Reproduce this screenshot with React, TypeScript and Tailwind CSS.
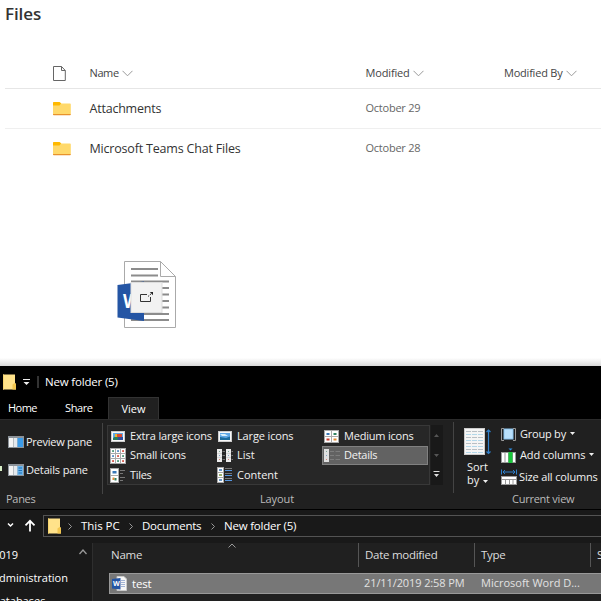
import type { ReactNode } from 'react';

type IconProps = { className?: string };

function Chevron({ className = '' }: IconProps) {
  return (
    <svg className={className} width="11" height="7" viewBox="0 0 11 7" fill="none" stroke="#999">
      <path d="M0.5 0.8 5.5 5.8 10.5 0.8" />
    </svg>
  );
}

function PageIcon() {
  return (
    <svg width="13" height="15" viewBox="0 0 13 15" fill="none" stroke="#666">
      <path d="M0.5 0.5H8.5L12.3 4.5V14.5H0.5Z M8.5 0.5V4.5H12.3" />
    </svg>
  );
}

function FolderIcon() {
  return (
    <svg className="mb-px" width="18" height="15" viewBox="0 0 18 15">
      <path d="M0 2a1 1 0 0 1 1-1h5.5l2 1.5H17a.8.8 0 0 1 .8.8V13H0Z" fill="#ffd96b" />
      <path d="M0 2a1 1 0 0 1 1-1h5.5l1.6 1.4L6.5 4.5H0Z" fill="#ffb900" />
      <path d="M0 13h17.8v.4a.8.8 0 0 1-.8.8H.8a.8.8 0 0 1-.8-.8Z" fill="#e8922c" />
    </svg>
  );
}

function ExplorerFolder() {
  return (
    <svg className="shrink-0" width="13" height="16" viewBox="0 0 13 16">
      <path d="M0 0.5H12V9L13 10V15.5H0Z" fill="#ffe28a" />
      <path d="M9.5 10.5 11.5 9 13 10V15.5H9.5Z" fill="#f2c64f" />
      <path d="M0 0.5H1V15.5H0Z" fill="#f7d56e" />
    </svg>
  );
}

function Caret() {
  return (
    <svg className="mb-[3px] ml-1 inline-block" width="5" height="3" viewBox="0 0 5 3">
      <path d="M0 0H5L2.5 3Z" fill="#eee" />
    </svg>
  );
}

function PaneIcon({ details = false }: { details?: boolean }) {
  return (
    <svg className="shrink-0" width="16" height="12" viewBox="0 0 16 12">
      <rect width="16" height="12" fill="#8b9299" />
      <rect x="1" y="2" width="4" height="9" fill="#f4f4f4" />
      <rect x="5.5" y="2" width="4" height="9" fill="#e4e8ec" />
      <rect x="9.5" y="2" width="5.5" height="9" fill={details ? '#6cb5ec' : '#3c9be8'} />
      {details && <path d="M10.5 4H14M10.5 6.5H14M10.5 9H14" stroke="#1d6fb5" />}
    </svg>
  );
}

function PictureIcon({ large = false }: { large?: boolean }) {
  return (
    <svg width="14" height="11" viewBox="0 0 14 11">
      <rect x="0.5" y="0.5" width="13" height="10" fill="#f8f8f8" stroke="#ccc" />
      <rect x="2" y="2" width="10" height="7" fill="#5fa8e6" />
      {large ? (
        <>
          <path d="M2 7 5 5 8 7V9H2Z" fill="#2b7d5c" />
          <path d="M6 3H11V6H6Z" fill="#db4b32" />
          <path d="M7 6H12V9H7Z" fill="#304d9c" />
          <path d="M4 3H6V6H4Z" fill="#e8b52f" />
        </>
      ) : (
        <>
          <path d="M2 6 5 6.5 8 7 12 5.5V9H2Z" fill="#1c6d9e" />
          <path d="M2 3H7L10 5H4Z" fill="#d7effb" />
        </>
      )}
    </svg>
  );
}

function MediumIcon() {
  return (
    <svg width="15" height="13" viewBox="0 0 15 13">
      <rect width="15" height="13" fill="#aaa" />
      <path d="M1 1H7V6H1ZM8 1H14V6H8ZM1 7H7V12H1ZM8 7H14V12H8Z" fill="#fff" />
      <rect x="2.5" y="3" width="3" height="2" fill="#3978b8" />
      <rect x="9.5" y="3" width="3" height="2" fill="#338562" />
      <rect x="2.5" y="8.5" width="3" height="2" fill="#ca3b2c" />
      <rect x="9.5" y="8.5" width="3" height="2" fill="#e18a32" />
    </svg>
  );
}

function SmallIcon() {
  const colors = ['#338562', '#3978b8', '#ca3b2c', '#3978b8', '#ca3b2c', '#338562', '#ca3b2c', '#338562', '#ca3b2c'];
  return (
    <svg width="16" height="16" viewBox="0 0 16 16">
      <rect width="16" height="16" fill="#aaa" />
      {colors.map((color, i) => (
        <g key={i} transform={`translate(${(i % 3) * 5 + 1} ${Math.floor(i / 3) * 5 + 1})`}>
          <rect width="4" height="4" fill="#fff" />
          <rect x="1.2" y="1.2" width="1.7" height="1.7" fill={color} />
        </g>
      ))}
    </svg>
  );
}

function ListIcon() {
  return (
    <svg width="16" height="13" viewBox="0 0 16 13">
      <path d="M0 0H5V13H0ZM9 0H14V13H9Z" fill="#ececec" />
      <path d="M0 4.5H5M0 8.5H5M9 4.5H14M9 8.5H14" stroke="#ccc" strokeWidth="0.7" />
      <path d="M2 2.5H3M11 2.5H12" stroke="#7faa98" />
      <path d="M2 6.5H3M11 6.5H12" stroke="#7fa3c8" />
      <path d="M2 10.5H3M11 10.5H12" stroke="#d8857c" />
      <path d="M5.5 2.5H8M5.5 6.5H8M5.5 10.5H8M14.5 2.5H16M14.5 6.5H16M14.5 10.5H16" stroke="#777" />
    </svg>
  );
}

function DetailsIcon() {
  return (
    <svg width="16" height="13" viewBox="0 0 16 13">
      <rect width="5" height="13" fill="#e0e0e0" />
      <path d="M2 2.5H3" stroke="#7faa98" />
      <path d="M2 6.5H3" stroke="#7fa3c8" />
      <path d="M2 10.5H3" stroke="#d8857c" />
      <path d="M6 2.5H10M11.5 2.5H16M6 6.5H10M11.5 6.5H16M6 10.5H10M11.5 10.5H16" stroke="#7d7d7d" />
    </svg>
  );
}

function TilesIcon() {
  return (
    <svg width="16" height="15" viewBox="0 0 16 15">
      <rect width="9" height="15" fill="#aaa" />
      <path d="M1 1H8V7H1ZM1 8H8V14H1Z" fill="#fff" />
      <rect x="2.5" y="3" width="4" height="2.5" fill="#3978b8" />
      <rect x="2.5" y="9.5" width="2" height="2.5" fill="#e18a32" />
      <rect x="4.5" y="10" width="2" height="2.5" fill="#338562" />
      <path d="M10 2.5H15M10 5.5H13M10 9.5H15M10 12.5H13" stroke="#777" />
    </svg>
  );
}

function ContentIcon() {
  return (
    <svg width="16" height="16" viewBox="0 0 16 16">
      <rect width="7" height="16" fill="#aaa" />
      <path d="M1 1H6V5H1ZM1 6H6V10H1ZM1 11H6V15H1Z" fill="#fff" />
      <path d="M2 3H5M2 13H5" stroke="#3978b8" strokeWidth="1.5" />
      <path d="M2 8H5" stroke="#79963b" strokeWidth="1.5" />
      <path d="M8 1.5H15M8 6.5H15M8 11.5H15" stroke="#777" />
      <path d="M8 3.5H15M8 8.5H15M8 13.5H15" stroke="#5796df" strokeWidth="1.2" />
    </svg>
  );
}

function SortIcon() {
  return (
    <svg width="27" height="28" viewBox="0 0 27 28">
      <rect x="0.5" y="0.5" width="20" height="26" fill="#f5f5f5" stroke="#ccc" />
      {[3, 6, 9, 12, 15, 18, 21, 24].map((y) => (
        <path key={y} d={`M2 ${y + 0.5}H19`} stroke={y % 2 ? '#b9bfc4' : '#b3d8ea'} strokeDasharray="5 1" />
      ))}
      <path d="M24.5 2V25.5M22.5 4 24.5 2 26.5 4M22.5 23.5 24.5 25.5 26.5 23.5" stroke="#2f7fca" strokeWidth="1.2" fill="none" />
    </svg>
  );
}

function GroupIcon() {
  return (
    <svg className="shrink-0" width="15" height="13" viewBox="0 0 15 13">
      <rect x="3" y="1" width="9" height="10" fill="#b9e0fb" stroke="#8cc4ee" />
      <path d="M3 0.5H0.5V12.5H3M12 0.5H14.5V12.5H12" fill="none" stroke="#999" />
    </svg>
  );
}

function AddColumnsIcon() {
  return (
    <svg className="mb-px shrink-0" width="15" height="15" viewBox="0 0 15 15">
      <path d="M7.5 0.5H11.5L9.5 2.5Z" fill="#2f8fe3" />
      <rect y="4" width="15" height="11" fill="#999" />
      <path d="M1 5H3.5V14H1ZM4.5 5H7V14H4.5ZM12 5H14V14H12Z" fill="#fff" />
      <rect x="7.5" y="4" width="4" height="11" fill="#19c83a" />
    </svg>
  );
}

function SizeColumnsIcon() {
  return (
    <svg className="shrink-0" width="16" height="16" viewBox="0 0 16 16">
      <path d="M0.5 0.5V5.5M15.5 0.5V5.5M2 3H14M4 1 2 3 4 5M12 1 14 3 12 5" fill="none" stroke="#2f7fca" />
      <rect y="7" width="16" height="9" fill="#999" />
      <path d="M1 8H15V10H1ZM1 11H4V15H1ZM5 11H8V15H5ZM9 11H11.5V15H9ZM12.5 11H15V15H12.5Z" fill="#fff" />
    </svg>
  );
}

function DraggedDocument() {
  return (
    <div className="absolute left-[117px] top-[260px] h-[68px] w-[59px]">
      <svg width="59" height="68" viewBox="0 0 59 68">
        <path d="M7.5 1.5H43.5L58.5 16.5V67.5H7.5Z" fill="#fff" stroke="#aaa" />
        <path d="M43.5 1.5V16.5H58.5" fill="none" stroke="#aaa" />
        <path d="M14 9H41M14 15.5H41M14 21.5H52M14 28H52M14 34.5H52M14 41H52M14 47.5H52M14 54H52M14 60H52" stroke="#8c8c8c" strokeWidth="2" />
        <path d="M0.5 25 27 21.5V61L0.5 57.5Z" fill="#2455a4" />
        <text x="6" y="48" fill="#fff" fontFamily="Open Sans, sans-serif" fontSize="19" fontWeight="700" textLength="17" lengthAdjust="spacingAndGlyphs">W</text>
        <rect x="14" y="22.5" width="31" height="30" fill="#f2f2f2" stroke="#ddd" />
        <path d="M30 34.5H23.5V41.5H33.5V37" fill="none" stroke="#333" />
        <path d="M31 36.5 34.5 33.5" stroke="#333" strokeDasharray="1.5 1" />
        <path d="M32.8 32H36V35.2Z" fill="#222" />
      </svg>
    </div>
  );
}

function WordFileIcon() {
  return (
    <svg className="shrink-0" width="15" height="15" viewBox="0 0 15 15">
      <path d="M5 0.5H12L14.5 3V14.5H5Z" fill="#f6f6f6" stroke="#c9c9c9" />
      <path d="M9 4.5H13M9 6.5H13M9 8.5H13M9 10.5H13" stroke="#a2b3d4" />
      <path d="M0 3 8.5 2V13.5L0 12.5Z" fill="#2455a4" />
      <text x="1" y="10.3" fill="#fff" fontFamily="Open Sans, sans-serif" fontSize="7" fontWeight="700">W</text>
    </svg>
  );
}

type GalleryItemProps = { icon: ReactNode; label: string; active?: boolean; textClass?: string };

function GalleryItem({ icon, label, active, textClass = '' }: GalleryItemProps) {
  return (
    <div className={`flex h-[19px] items-center border ${active ? 'border-[#818181] bg-[#626262]' : 'border-transparent'}`}>
      <span className="flex w-[17px] shrink-0 justify-center">{icon}</span>
      <span className={`ml-1 whitespace-nowrap ${textClass}`}>{label}</span>
    </div>
  );
}

function FilesTable() {
  const rows = [
    { name: 'Attachments', modified: 'October 29', tracking: 'tracking-[-0.22px]' },
    { name: 'Microsoft Teams Chat Files', modified: 'October 28', tracking: 'tracking-[-0.19px]' },
  ];
  const grid = 'grid grid-cols-[48px_36.5px_276px_138.5px_1fr] items-center';

  return (
    <div className="ml-[5px] text-[#444]">
      <div className={`${grid} h-[31px] border-b border-[#e6e6e6] text-[11px]`}>
        <span />
        <PageIcon />
        <span className="flex items-center pt-px tracking-[-0.4px]">Name<Chevron className="ml-[3px]" /></span>
        <span className="flex items-center pt-px tracking-[-0.15px]">Modified<Chevron className="ml-[3px]" /></span>
        <span className="flex items-center pt-px tracking-[-0.22px]">Modified By<Chevron className="ml-1" /></span>
      </div>
      {rows.map((row, i) => (
        <div key={row.name} className={`${grid} h-10 ${i === 0 ? 'border-b border-[#efefef]' : 'pb-px'}`}>
          <span />
          <FolderIcon />
          <span className={`pt-px text-[12.5px] text-[#333] ${row.tracking}`}>{row.name}</span>
          <span className={`text-[11px] tracking-[-0.24px] text-[#666] ${i === 0 ? '' : 'pb-px'}`}>{row.modified}</span>
        </div>
      ))}
    </div>
  );
}

function Ribbon() {
  return (
    <div className="flex h-[90px] border-t border-[#2b2b2b] bg-[#202020] text-[11px] font-medium text-[#f2f2f2]">
      {/* Panes */}
      <div className="relative w-[102px] shrink-0 pl-2 pt-[13px]">
        <div className="flex h-[18px] items-center gap-[2px] whitespace-nowrap tracking-[-0.25px]"><PaneIcon />Preview pane</div>
        <div className="mt-[10px] flex h-[18px] items-center gap-[2px] whitespace-nowrap tracking-[-0.15px]"><PaneIcon details />Details pane</div>
        <span className="absolute left-0 top-[46px] h-[5px] w-[2px] bg-[#d7edc5]" />
        <div className="-ml-[2px] mt-[12px] font-normal leading-4 tracking-[-0.3px] text-[#bbb]">Panes</div>
      </div>
      <div className="mt-[3px] h-[71px] w-px shrink-0 bg-[#444]" />

      {/* Layout gallery */}
      <div className="w-[341px] shrink-0 pl-1 pt-[5px]">
        <div className="flex">
          <div className="grid h-[60px] w-[323px] grid-cols-[107px_107px_106px] content-start gap-y-[0.5px] border border-[#383838] bg-[#272727] pt-[0.5px]">
            <GalleryItem icon={<PictureIcon large />} label="Extra large icons" textClass="tracking-[-0.14px]" />
            <GalleryItem icon={<PictureIcon />} label="Large icons" textClass="tracking-[-0.14px]" />
            <GalleryItem icon={<MediumIcon />} label="Medium icons" textClass="tracking-[-0.2px]" />
            <GalleryItem icon={<SmallIcon />} label="Small icons" textClass="tracking-[-0.14px]" />
            <GalleryItem icon={<ListIcon />} label="List" />
            <GalleryItem icon={<DetailsIcon />} label="Details" active textClass="tracking-[-0.24px]" />
            <GalleryItem icon={<TilesIcon />} label="Tiles" textClass="tracking-[-0.3px]" />
            <GalleryItem icon={<ContentIcon />} label="Content" textClass="tracking-[-0.02px]" />
          </div>
          <svg width="13" height="60" viewBox="0 0 13 60">
            <rect x="1" width="12" height="60" fill="#191919" />
            <path d="M4 12H9L6.5 9Z M4 29H9L6.5 32Z" fill="#555" />
            <path d="M3.5 46H9.5V47H3.5ZM4 49H9L6.5 52Z" fill="#ddd" />
          </svg>
        </div>
        <div className="mt-[6px] pl-[3px] text-center font-normal leading-4 tracking-[-0.1px] text-[#bbb]">Layout</div>
      </div>
      <div className="ml-[9px] mt-[2px] h-[71px] w-px shrink-0 bg-[#444]" />

      {/* Current view */}
      <div className="flex-1 pl-[10px]">
        <div className="flex">
          <div className="w-[37px] shrink-0 pt-[8px]">
            <SortIcon />
            <div className="mt-[5px] w-[27px] text-center leading-[12px]">Sort</div>
            <div className="flex w-[27px] items-end whitespace-nowrap pl-[3px] leading-[13px]">by<Caret /></div>
          </div>
          <div className="whitespace-nowrap pt-[4px]">
            <div className="flex h-[21px] items-center gap-[4px] tracking-[-0.22px]"><GroupIcon /><span>Group by<Caret /></span></div>
            <div className="flex h-[21px] items-center gap-[4px] tracking-[-0.14px]"><AddColumnsIcon /><span>Add columns<Caret /></span></div>
            <div className="flex h-[22px] items-center gap-[2px] tracking-[-0.15px]"><SizeColumnsIcon />Size all columns</div>
          </div>
        </div>
        <div className="mt-[3px] pl-[48px] font-normal leading-4 tracking-[-0.25px] text-[#bbb]">Current view</div>
      </div>
    </div>
  );
}

function Crumb({ label, width }: { label: string; width: string }) {
  return (
    <div className={`flex shrink-0 items-center whitespace-nowrap ${width}`}>
      <svg className="mr-[9px] shrink-0" width="4" height="7" viewBox="0 0 4 7" fill="none" stroke="#999">
        <path d="M0.5 0.5 3.5 3.5 0.5 6.5" />
      </svg>
      {label}
    </div>
  );
}

function Explorer() {
  return (
    <section className="h-[235px] overflow-hidden bg-black text-[11.5px] text-white">
      {/* Title bar */}
      <div className="flex h-[31px] items-center pl-[3px]">
        <ExplorerFolder />
        <svg className="ml-[7px] mt-[2px]" width="7" height="7" viewBox="0 0 7 7" fill="#eee">
          <path d="M0 0H7V1H0ZM0.5 3H6.5L3.5 6Z" />
        </svg>
        <span className="ml-[7px] h-[12px] w-[2px] bg-[#333]" />
        <span className="ml-[6px] tracking-[-0.18px]">New folder (5)</span>
      </div>
      <div className="flex h-[22px] text-[11px] font-medium">
        <span className="w-[65px] pl-2 leading-[22px] tracking-[-0.55px]">Home</span>
        <span className="w-[43px] leading-[22px] tracking-[-0.4px]">Share</span>
        <span className="w-[51px] border border-b-0 border-[#333] bg-[#202020] text-center leading-[21px]">View</span>
      </div>
      <Ribbon />

      {/* Address bar */}
      <div className="flex h-[34px] items-start border-t border-black bg-[#191919] pt-[5px]">
        <svg className="shrink-0" width="43" height="22" viewBox="0 0 43 22" fill="none" stroke="#fff">
          <path d="M8 8.5 10.5 11 13 8.5" strokeWidth="1.5" />
          <path d="M30 16.5V6M25.5 10.3 30 5.8 34.5 10.3" strokeWidth="1.8" />
        </svg>
        <div className="flex h-[22px] flex-1 items-center border border-r-0 border-[#535353] pl-[4px]">
          <ExplorerFolder />
          <div className="ml-[7px] flex text-[11.5px]">
            <Crumb label="This PC" width="w-[61px] tracking-[-0.05px]" />
            <Crumb label="Documents" width="w-[82px] tracking-[-0.25px]" />
            <Crumb label="New folder (5)" width="w-[100px] tracking-[-0.22px]" />
          </div>
        </div>
      </div>

      {/* Navigation pane and file list */}
      <div className="flex h-[58px] bg-[#202020]">
        <div className="relative w-[93px] shrink-0 overflow-hidden border-r border-[#2e2e2e] bg-[#191919] text-[11px]">
          <div className="-ml-[7px] flex h-[83px] flex-col whitespace-nowrap leading-[23px]">
            <span>2019</span>
            <span className="tracking-[-0.02px]">administration</span>
            <span>databases</span>
          </div>
          <svg className="absolute left-[79px] top-[6px]" width="8" height="6" viewBox="0 0 8 6" fill="none" stroke="#999">
            <path d="M0.5 5 4 1 7.5 5" strokeWidth="1.3" />
          </svg>
        </div>
        <div className="relative w-[508px] pl-4">
          <svg className="absolute left-[135px] top-0" width="8" height="5" viewBox="0 0 8 5" fill="none" stroke="#999">
            <path d="M0.5 4.5 4 1 7.5 4.5" />
          </svg>
          <div className="flex h-[30px] text-[#ddd]">
            <span className="h-6 w-[250px] shrink-0 border-r border-[#555] pl-[2px] leading-6 tracking-[-0.25px]">Name</span>
            <span className="h-6 w-[116px] shrink-0 border-r border-[#555] pl-[6px] leading-6 tracking-[-0.28px]">Date modified</span>
            <span className="h-6 w-[116px] shrink-0 border-r border-[#555] pl-[6px] leading-6 tracking-[-0.3px]">Type</span>
            <span className="pl-[6px] leading-6">Size</span>
          </div>
          <div className="flex h-[21px] items-center whitespace-nowrap border border-r-0 border-[#999] bg-[#777]">
            <span className="flex w-[254px] items-center gap-[5px] pl-[2px] font-medium tracking-[-0.2px]"><WordFileIcon />test</span>
            <span className="w-[117px] text-[11px] tracking-[-0.1px] text-[#e2e2e2]">21/11/2019 2:58 PM</span>
            <span className="text-[11px] text-[#e2e2e2]">Microsoft Word D...</span>
          </div>
        </div>
      </div>
    </section>
  );
}

export default function App() {
  return (
    <main className="relative h-[601px] w-[601px] overflow-hidden bg-white font-['Open_Sans','Noto_Sans',sans-serif]">
      <section className="h-[366px] bg-[linear-gradient(to_bottom,#fff_358px,#d8d8d8_366px)]">
        <h1 className="h-[58px] pl-[5px] pt-[3px] text-[17px] font-semibold leading-[22px] tracking-[-0.1px] text-[#333]">Files</h1>
        <FilesTable />
        <DraggedDocument />
      </section>
      <Explorer />
    </main>
  );
}
